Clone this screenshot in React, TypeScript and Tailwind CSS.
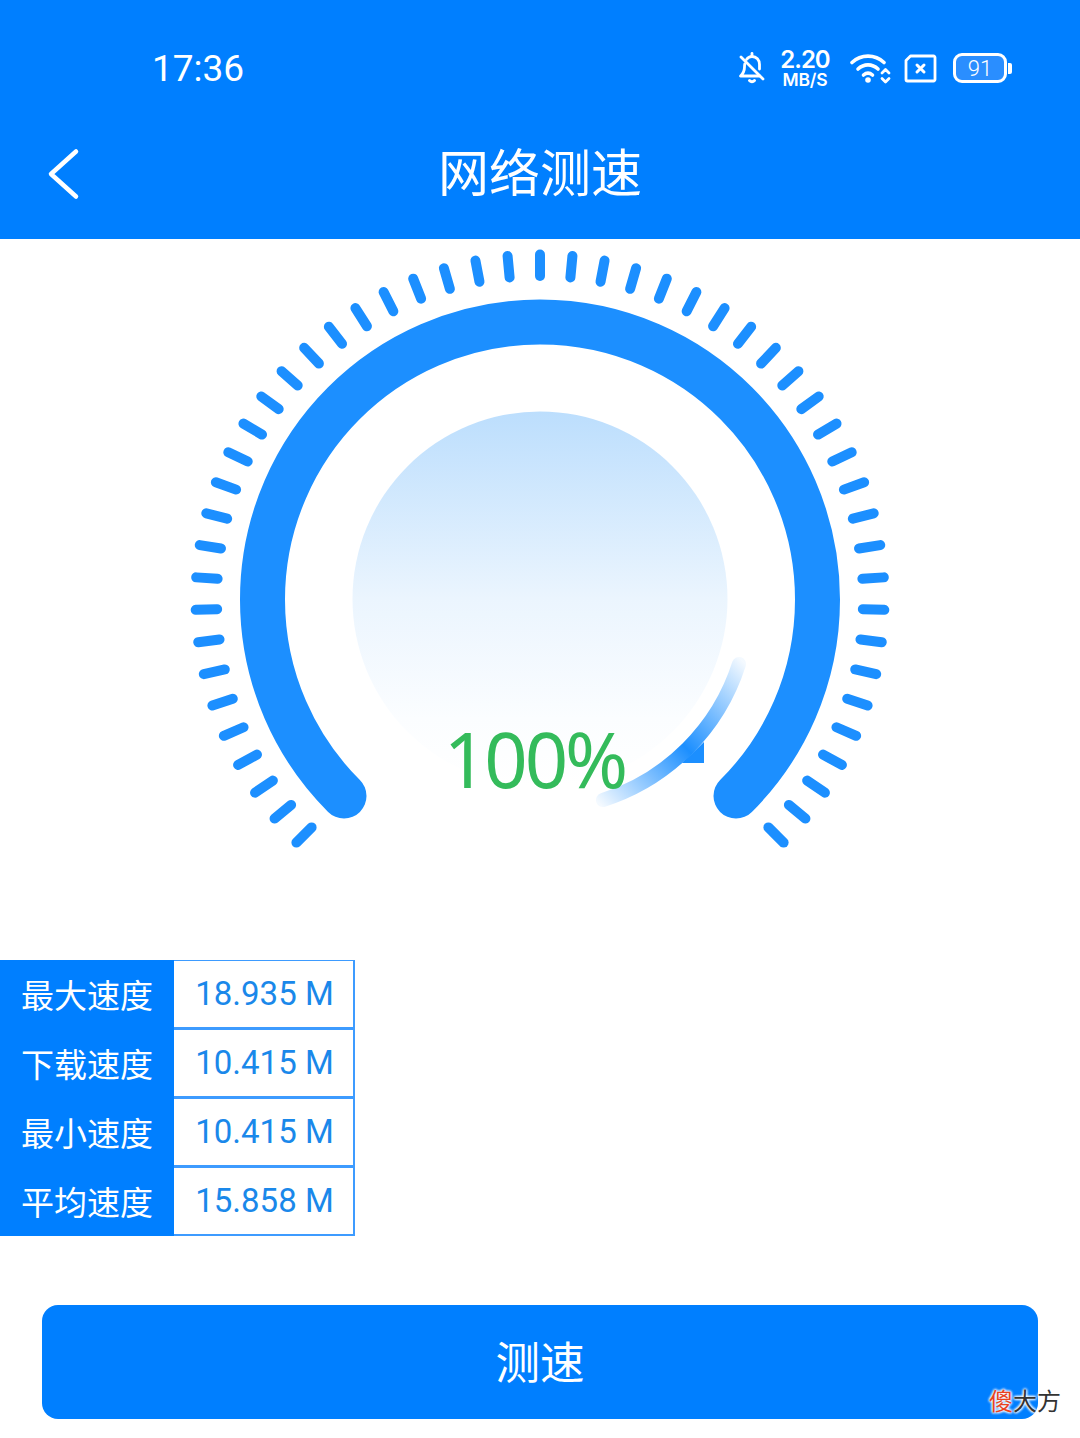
const CJK = "font-['Noto_Sans_CJK_SC',sans-serif]";
const CX = 540;
const CY = 360; // gauge centre inside the gauge drawing (page y 599)

const ticks = Array.from({ length: 51 }, (_, i) => {
  const a = ((-135 + i * 5.4) * Math.PI) / 180;
  const s = Math.sin(a);
  const c = Math.cos(a);
  return {
    x1: CX + 323 * s,
    y1: CY - 323 * c,
    x2: CX + 344.5 * s,
    y2: CY - 344.5 * c,
  };
});

const rows = [
  ["最大速度", "18.935 M"],
  ["下载速度", "10.415 M"],
  ["最小速度", "10.415 M"],
  ["平均速度", "15.858 M"],
];

function Bell() {
  return (
    <svg width="28" height="32" viewBox="0 0 28 32" fill="none" stroke="white" strokeWidth="2.800" strokeLinecap="round" strokeLinejoin="round">
      <path d="M14 1.500v2.500" />
      <path d="M8.500 7.500C10 5.500 12 4.500 14 4.500c4.500 0 7.500 3.500 7.500 8v4.500" />
      <path d="M6.800 12c-.2.6-.3 1.600-.3 3 0 4-1.200 6.500-4 9h19" />
      <path d="M11.500 28.500c1.500 1.600 3.500 1.600 5 0" strokeWidth="3" />
      <path d="M3 5l22 22" />
    </svg>
  );
}

function Wifi() {
  return (
    <svg width="41" height="31" viewBox="0 0 41 31" fill="none" stroke="white" strokeWidth="3.600" strokeLinecap="round" strokeLinejoin="round">
      <path d="M2 9.500C11 1 25 1 34 9.500" />
      <path d="M8 16c6-5.500 14-5.500 20 0" />
      <path d="M13.500 22c3-2.600 6-2.600 9 0" />
      <circle cx="18" cy="27" r="2.800" fill="white" stroke="none" />
      <path d="M32 20l3.500-3.500L39 20" strokeWidth="2.800" />
      <path d="M32 25.500l3.500 3.500 3.500-3.500" strokeWidth="2.800" />
    </svg>
  );
}

function Sim() {
  return (
    <svg width="33" height="29" viewBox="0 0 33 29" fill="none" stroke="white">
      <path d="M6.500 2h23a1.500 1.500 0 0 1 1.500 1.500v22a1.500 1.500 0 0 1-1.500 1.500h-26A1.500 1.500 0 0 1 2 25.500V6.500z" strokeWidth="2.800" strokeLinejoin="round" />
      <path d="M13 11l7 7M20 11l-7 7" strokeWidth="3" strokeLinecap="round" />
    </svg>
  );
}

function Battery() {
  return (
    <div className="flex items-center gap-[1px]">
      <div className="flex h-[30px] w-[54px] items-center justify-center rounded-[9px] border-[3px] border-white bg-[#2a8eff] font-['Roboto',sans-serif] text-[22px] font-light text-white">
        91
      </div>
      <div className="h-[11px] w-[4px] rounded-r-[2px] bg-white" />
    </div>
  );
}

export default function App() {
  return (
    <div className="relative h-[1438px] w-[1080px] overflow-hidden bg-white">
      <header className="flex h-[239px] flex-col bg-[#007fff] text-white">
        <div className="flex h-[136px] items-center pl-[152px] pr-[68px]">
          <span className="pt-[2px] font-['Roboto',sans-serif] text-[37px]">17:36</span>
          <div className="ml-auto flex items-center">
            <div className="mr-[1px]">
              <Bell />
            </div>
            <div className="ml-[13px] flex w-[50px] flex-col items-center font-['Inter',sans-serif] font-semibold">
              <span className="h-[23px] text-[24px] leading-[22px] tracking-[-1px]">2.20</span>
              <span className="h-[16px] text-[17.500px] leading-[16px] tracking-[-0.2px]">MB/S</span>
            </div>
            <div className="ml-[20px]">
              <Wifi />
            </div>
            <div className="ml-[13px]">
              <Sim />
            </div>
            <div className="ml-[16px]">
              <Battery />
            </div>
          </div>
        </div>
        <div className="grid h-[72px] grid-cols-[1fr_auto_1fr] items-center">
          <svg className="ml-[46px] mt-[3px]" width="36" height="56" viewBox="0 0 36 56" fill="none" stroke="white" strokeWidth="4.500" strokeLinecap="round" strokeLinejoin="round">
            <path d="M30 5.500L5 28l25 22.500" />
          </svg>
          <h1 className={`${CJK} mb-[4px] text-[51px] font-normal leading-none`}>网络测速</h1>
          <div />
        </div>
      </header>

      <main className="relative h-[721px]">
        <svg className="block" width="1080" height="721" viewBox="0 0 1080 721" fill="none">
          <defs>
            <linearGradient id="disc" x1="0" y1="0" x2="0" y2="1">
              <stop offset="0" stopColor="#bcdefd" />
              <stop offset="0.5" stopColor="#ebf5fe" />
              <stop offset="0.82" stopColor="#fbfdff" />
              <stop offset="1" stopColor="#ffffff" />
            </linearGradient>
            <linearGradient id="sweep" gradientUnits="userSpaceOnUse" x1="745" y1="425" x2="600" y2="565">
              <stop offset="0" stopColor="#1c8fff" stopOpacity="0.05" />
              <stop offset="0.5" stopColor="#1c8fff" stopOpacity="1" />
              <stop offset="1" stopColor="#1c8fff" stopOpacity="0.05" />
            </linearGradient>
          </defs>
          <circle cx={CX} cy={CY} r="187.500" fill="url(#disc)" />
          {ticks.map((t, i) => (
            <line key={i} x1={t.x1} y1={t.y1} x2={t.x2} y2={t.y2} stroke="#1c8fff" strokeWidth="10" strokeLinecap="round" />
          ))}
          <path d="M344 557A277.500 277.500 0 1 1 736 557" stroke="#1c8fff" strokeWidth="45" strokeLinecap="round" />
          <path d="M704 503V524H682z" fill="#1c8fff" />
          <path d="M739 425A210 210 0 0 1 603 561" stroke="url(#sweep)" strokeWidth="14" strokeLinecap="round" />
        </svg>
        <div className="absolute left-0 right-0 top-[475px] pr-[11px] text-center font-['Noto_Sans',sans-serif] text-[76px] font-normal leading-[90px] tracking-[-3px] text-[#34bb5b]">
          100%
        </div>
      </main>

      <section className="flex w-[355px] flex-col">
        {rows.map(([label, value]) => (
          <div key={label} className="flex h-[69px]">
            <div className={`${CJK} flex w-[174px] items-center justify-center bg-[#007fff] text-[33px] text-white`}>
              {label}
            </div>
            <div className="flex w-[181px] items-center justify-center border-t-[1px] border-r-[2px] border-b-[2px] border-[#3d9bff] pb-[1px] pl-[2px] font-['Roboto',sans-serif] text-[33px] text-[#1a88ea]">
              {value}
            </div>
          </div>
        ))}
      </section>

      <div className="px-[42px] pt-[69px]">
        <button className={`${CJK} flex h-[114px] w-full items-center justify-center rounded-[16px] bg-[#007fff] pb-[4px] text-[44.500px] font-normal text-white`}>
          测速
        </button>
      </div>

      <div className={`${CJK} absolute left-[989px] top-[1382px] text-[24px] leading-[36px] text-[#333333] [text-shadow:0_0_3px_white,0_0_3px_white,0_0_3px_white,0_0_3px_white]`}>
        <span className="text-[#e8431f]">傻</span>大方
      </div>
    </div>
  );
}
